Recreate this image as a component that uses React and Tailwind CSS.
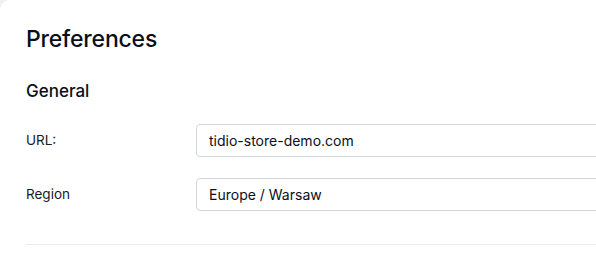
export default function App() {
    const font = { fontFamily: "Inter, 'Noto Sans', sans-serif" };

    return (
        <div className="w-[596px] h-[273px] bg-[#eef0f3] overflow-hidden" style={font}>
            <div className="h-full bg-white rounded-tl-[10px] pl-[26px] pt-[25px] overflow-hidden">
                {/* Header */}
                <h1 className="text-[23px] leading-[28px] font-medium text-[#080f1a] tracking-[-0.2px]">Preferences</h1>

                <h2 className="mt-[27px] text-[17px] leading-[22px] font-medium text-[#080f1a]">General</h2>

                {/* Fields */}
                <div className="mt-[22px] flex flex-col gap-[21px]">
                    <div className="flex items-center">
                        <label className="w-[170px] shrink-0 text-[13.5px] text-[#161b22]">URL:</label>
                        <input
                            type="text"
                            defaultValue="tidio-store-demo.com"
                            className="w-[440px] shrink-0 h-[33px] px-[12px] rounded-[4px] border border-[#cfd6e0] text-[14px] text-[#080f1a] outline-none"
                        />
                    </div>
                    <div className="flex items-center">
                        <label className="w-[170px] shrink-0 text-[13.5px] text-[#161b22]">Region</label>
                        <div className="w-[440px] shrink-0 h-[33px] px-[12px] rounded-[4px] border border-[#cfd6e0] text-[14px] text-[#080f1a] flex items-center">
                            Europe / Warsaw
                        </div>
                    </div>
                </div>

                <div className="mt-[33px] h-px bg-[#e8e9eb]" />
            </div>
        </div>
    );
}
